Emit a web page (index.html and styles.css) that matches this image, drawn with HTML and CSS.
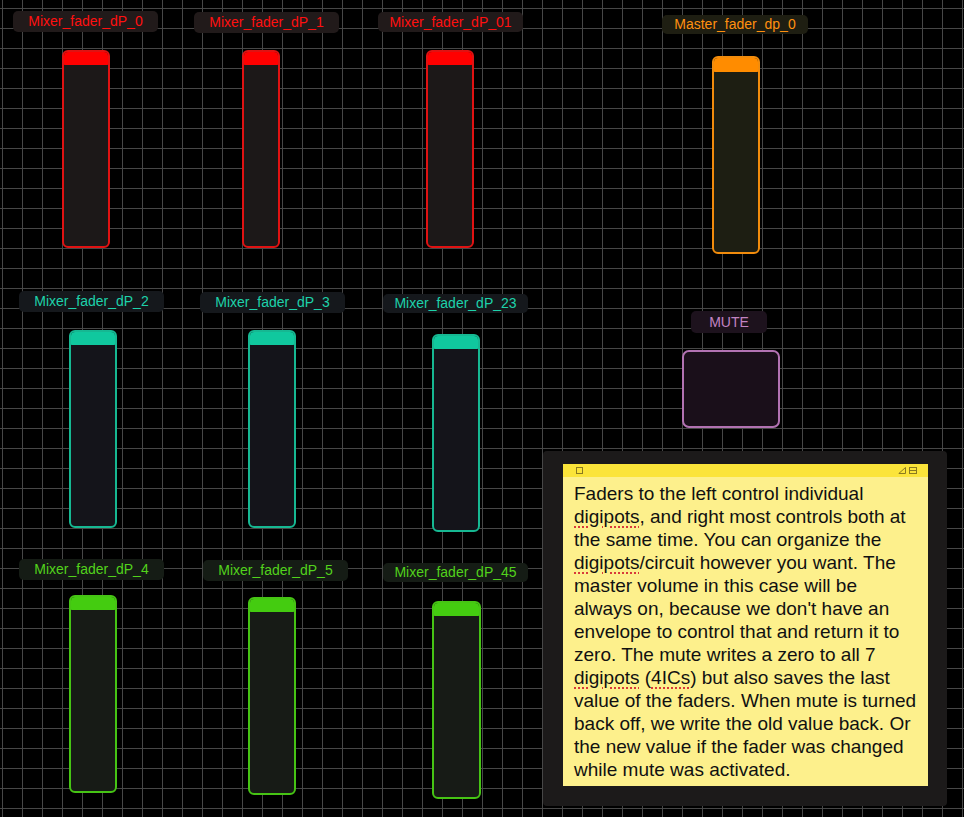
FILE: index.html
```html
<!DOCTYPE html>
<html>
<head>
<meta charset="utf-8">
<link rel="stylesheet" href="styles.css">
</head>
<body>
<div class="canvas">
  <div class="label red l-r1">Mixer_fader_dP_0</div>
  <div class="fader red f-r1"><div class="knob"></div></div>
  <div class="label red l-r2">Mixer_fader_dP_1</div>
  <div class="fader red f-r2"><div class="knob"></div></div>
  <div class="label red l-r3">Mixer_fader_dP_01</div>
  <div class="fader red f-r3"><div class="knob"></div></div>

  <div class="label orange l-m">Master_fader_dp_0</div>
  <div class="fader orange f-m"><div class="knob"></div></div>

  <div class="label teal l-t1">Mixer_fader_dP_2</div>
  <div class="fader teal f-t1"><div class="knob"></div></div>
  <div class="label teal l-t2">Mixer_fader_dP_3</div>
  <div class="fader teal f-t2"><div class="knob"></div></div>
  <div class="label teal l-t3">Mixer_fader_dP_23</div>
  <div class="fader teal f-t3"><div class="knob"></div></div>

  <div class="label purple l-mute">MUTE</div>
  <div class="mute-btn"></div>

  <div class="label green l-g1">Mixer_fader_dP_4</div>
  <div class="fader green f-g1"><div class="knob"></div></div>
  <div class="label green l-g2">Mixer_fader_dP_5</div>
  <div class="fader green f-g2"><div class="knob"></div></div>
  <div class="label green l-g3">Mixer_fader_dP_45</div>
  <div class="fader green f-g3"><div class="knob"></div></div>

  <div class="note">
    <div class="note-paper">
      <div class="note-head">
        <span class="sq"></span>
        <span class="head-right">
          <svg width="8" height="7" viewBox="0 0 8 7"><path d="M7.5 0.5 L7.5 6.5 L0.8 6.5 Z" fill="none" stroke="#8a7a20" stroke-width="1"/></svg>
          <svg width="8" height="7" viewBox="0 0 8 7"><rect x="0.5" y="0.5" width="7" height="6" fill="none" stroke="#8a7a20" stroke-width="1"/><line x1="0.5" y1="3.5" x2="7.5" y2="3.5" stroke="#8a7a20" stroke-width="1"/></svg>
        </span>
      </div>
      <div class="note-text">Faders to the left control individual<br><span class="sp">digipots</span>, and right most controls both at<br>the same time. You can organize the<br><span class="sp">digipots</span>/circuit however you want. The<br>master volume in this case will be<br>always on, because we don't have an<br>envelope to control that and return it to<br>zero. The mute writes a zero to all 7<br><span class="sp">digipots</span> (<span class="sp">4ICs</span>) but also saves the last<br>value of the faders. When mute is turned<br>back off, we write the old value back. Or<br>the new value if the fader was changed<br>while mute was activated.</div>
    </div>
  </div>
</div>
</body>
</html>
```

FILE: styles.css
```css
html, body {
  margin: 0;
  padding: 0;
  width: 964px;
  height: 817px;
  overflow: hidden;
  background: #000;
}

.canvas {
  position: relative;
  width: 964px;
  height: 817px;
  background-color: #000;
  background-image:
    linear-gradient(to right, #474747 1px, transparent 1px),
    linear-gradient(to bottom, #474747 1px, transparent 1px);
  background-size: 20px 20px;
  background-position: 2px 8px;
  font-family: "Liberation Sans", Arial, sans-serif;
}

.label {
  position: absolute;
  width: 145px;
  height: 21px;
  border-radius: 5px;
  font-size: 14px;
  line-height: 21px;
  text-align: center;
  white-space: nowrap;
}

.fader {
  position: absolute;
  width: 48px;
  height: 198px;
  box-sizing: border-box;
  border: 2px solid;
  border-radius: 6px;
  overflow: hidden;
}

.knob {
  height: 14px;
  margin: -2px -2px 0 -2px;
  border-radius: 5px 5px 4px 4px;
}

/* colour themes */
.label.red { background: #211a1a; color: #ff1010; }
.fader.red { background: #1c1818; border-color: #e01212; }
.fader.red .knob { background: #ff0000; height: 15px; }

.label.orange { background: #1e1e12; color: #ff9010; }
.fader.orange { background: #1d1e12; border-color: #f28c0c; }
.fader.orange .knob { background: #ff8c00; height: 16px; }

.label.teal { background: #15181c; color: #1ed2aa; }
.fader.teal { background: #14141a; border-color: #16b892; }
.fader.teal .knob { background: #10c89e; height: 15px; }

.label.green { background: #151c15; color: #52d21c; }
.fader.green { background: #171b16; border-color: #46c414; }
.fader.green .knob { background: #44cc10; height: 15px; }

.label.purple { background: #1d121d; color: #c283c2; }

/* positions on the patch canvas */
.l-r1 { left: 13px; top: 11px; }
.l-r2 { left: 194px; top: 12px; }
.l-r3 { left: 378px; top: 12px; height: 20px; line-height: 20px; }
.f-r1 { left: 62px; top: 50px; }
.f-r2 { left: 242px; top: 50px; width: 38px; }
.f-r3 { left: 426px; top: 50px; }

.l-m { left: 662px; top: 15px; width: 146px; height: 19px; line-height: 19px; }
.f-m { left: 712px; top: 56px; }

.l-t1 { left: 19px; top: 291px; }
.l-t2 { left: 200px; top: 292px; }
.l-t3 { left: 383px; top: 294px; height: 19px; line-height: 19px; }
.f-t1 { left: 69px; top: 330px; height: 198px; }
.f-t2 { left: 248px; top: 330px; height: 198px; }
.f-t3 { left: 432px; top: 334px; height: 198px; }

.l-mute { left: 691px; top: 311px; width: 76px; height: 22px; line-height: 22px; }
.mute-btn {
  position: absolute;
  left: 682px;
  top: 350px;
  width: 98px;
  height: 78px;
  box-sizing: border-box;
  border: 2px solid #b272b2;
  border-radius: 7px;
  background: #1a0f1a;
}

.l-g1 { left: 19px; top: 559px; }
.l-g2 { left: 203px; top: 560px; }
.l-g3 { left: 383px; top: 563px; height: 19px; line-height: 19px; }
.f-g1 { left: 69px; top: 595px; }
.f-g2 { left: 248px; top: 597px; }
.f-g3 { left: 432px; top: 601px; width: 49px; }

/* comment note */
.note {
  position: absolute;
  left: 543px;
  top: 451px;
  width: 404px;
  height: 355px;
  box-sizing: border-box;
  padding: 13px 19px 20px 20px;
  background: #1c1a1a;
  border-radius: 4px;
}

.note-paper {
  height: 322px;
  background: #fdf08c;
  display: flex;
  flex-direction: column;
}

.note-head {
  height: 13px;
  background: #fbe43a;
  display: flex;
  align-items: center;
  justify-content: space-between;
  padding: 0 11px 0 13px;
}

.sq {
  width: 5px;
  height: 5px;
  border: 1px solid #8a7a20;
}

.head-right {
  display: flex;
  gap: 3px;
  align-items: center;
}

.head-right svg { display: block; }

.note-text {
  padding: 5px 0 0 11px;
  font-size: 19px;
  line-height: 23px;
  color: #111;
  white-space: nowrap;
}

.sp {
  text-decoration: underline dotted #d83a3a;
  text-decoration-thickness: 2px;
  text-underline-offset: 3px;
}
```
